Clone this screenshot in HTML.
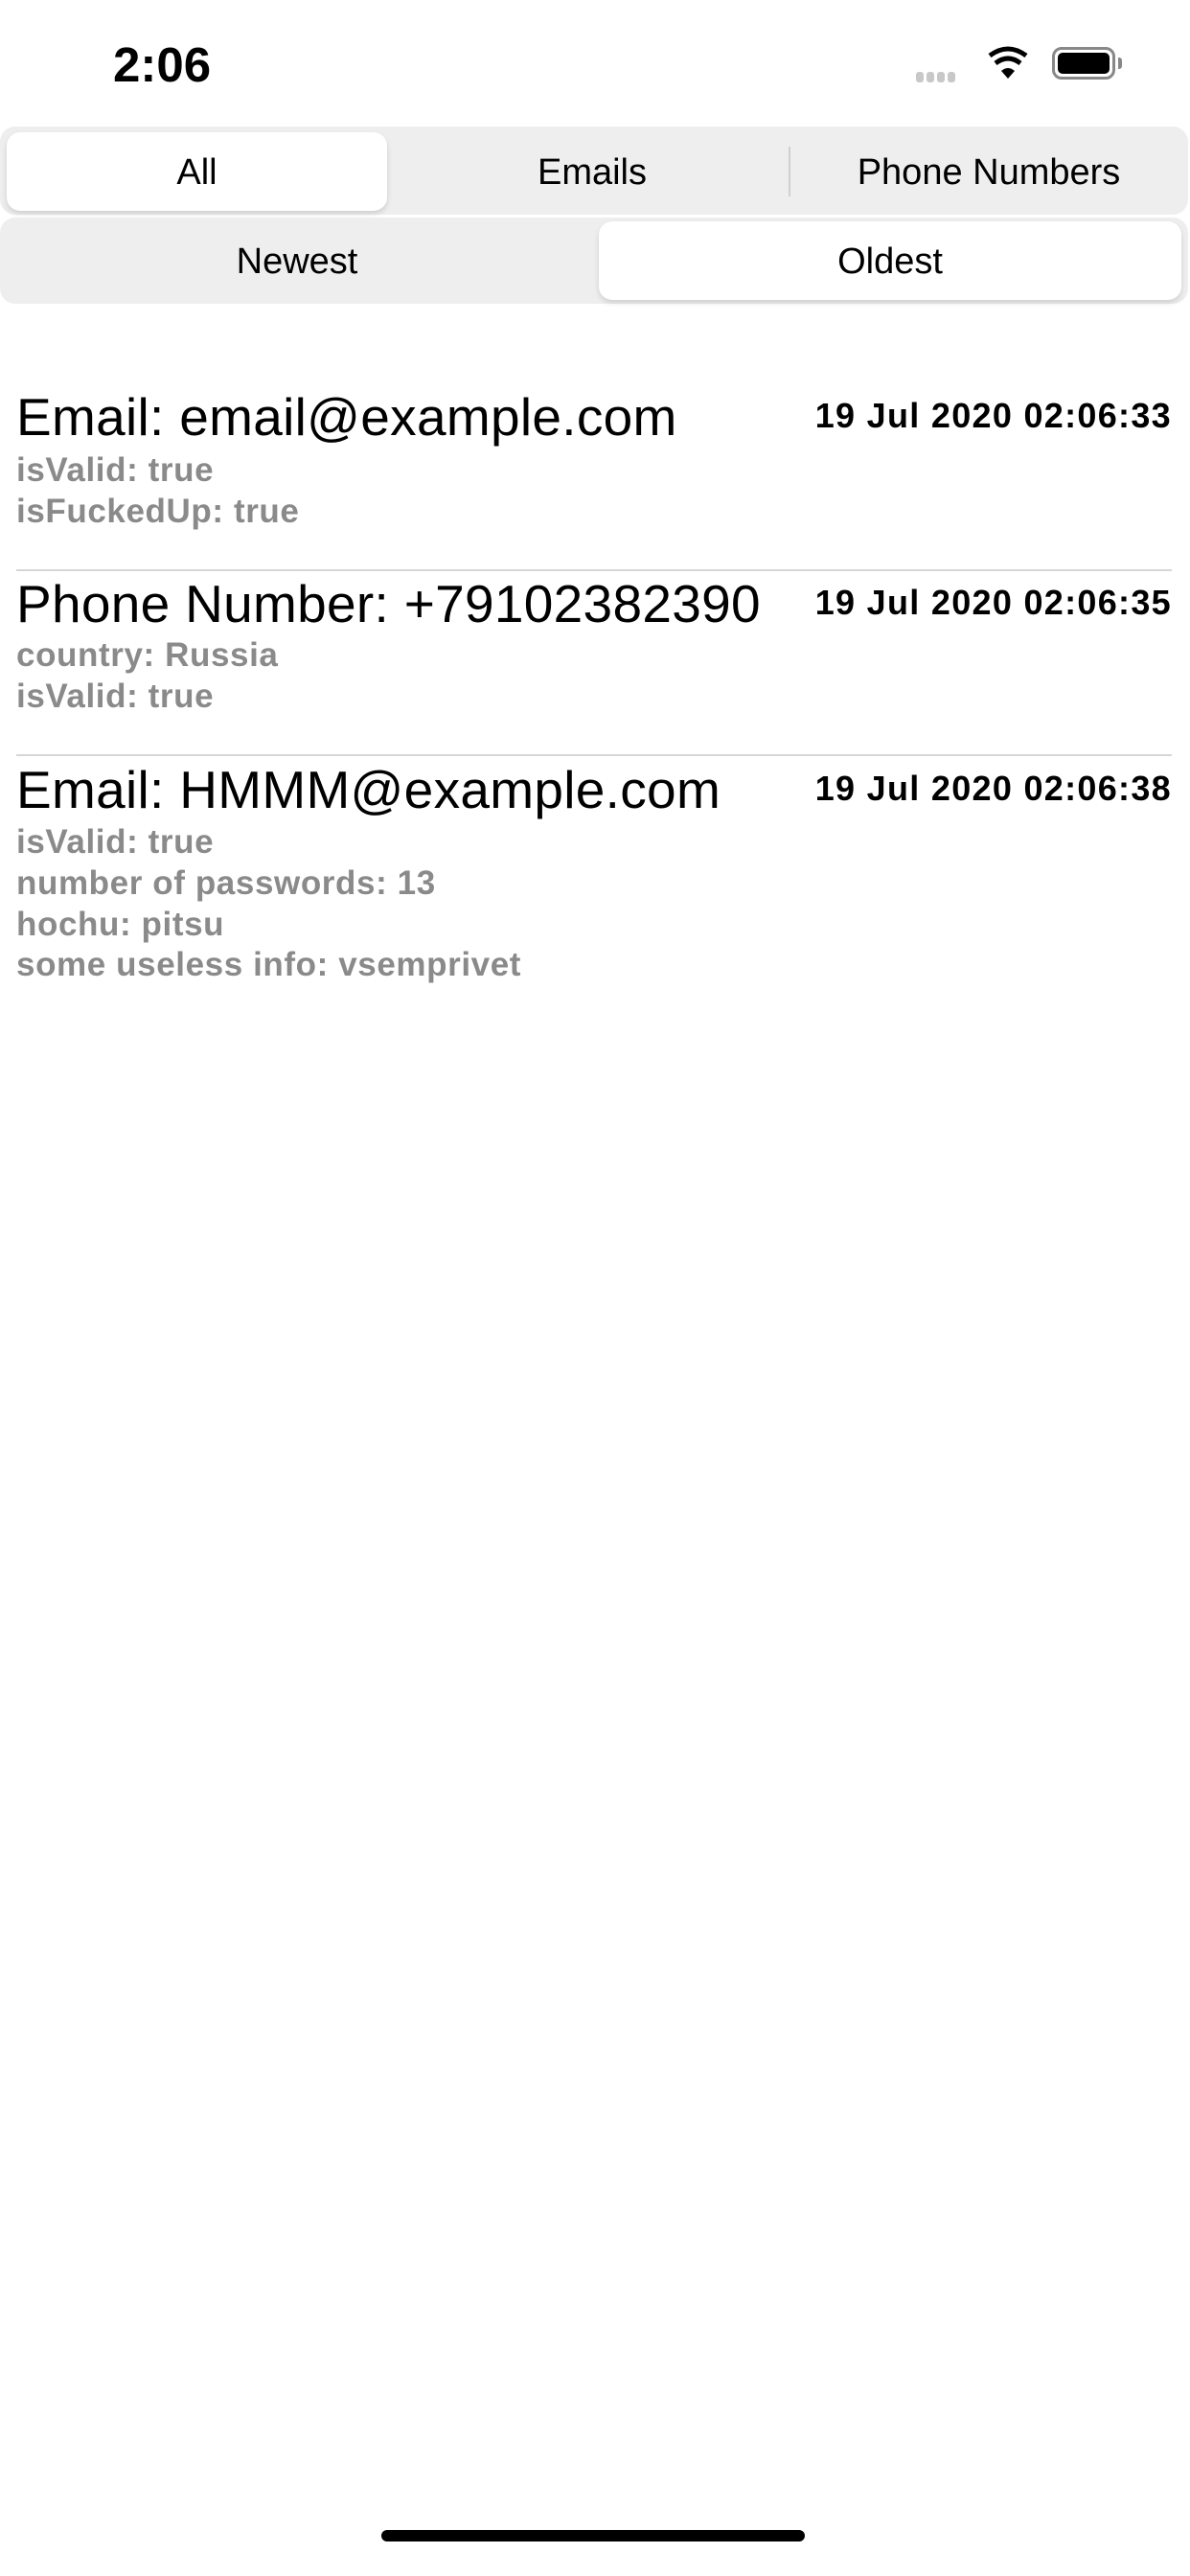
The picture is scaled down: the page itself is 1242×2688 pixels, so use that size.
<!DOCTYPE html>
<html><head><meta charset="utf-8"><style>
*{margin:0;padding:0;box-sizing:border-box}
html,body{width:1242px;height:2688px;background:#fff;overflow:hidden;font-family:"Liberation Sans",sans-serif;position:relative}
.a{position:absolute;white-space:nowrap}
.t{left:17px;font-size:55px;color:#000;height:60px;line-height:60px;letter-spacing:0.3px}
.d{right:19px;font-size:36px;font-weight:bold;color:#000;height:40px;line-height:40px;letter-spacing:1.3px}
.s{left:17px;font-size:35px;font-weight:bold;color:#8a8a8a;height:40px;line-height:40px;letter-spacing:0.6px}
.sep{position:absolute;left:17px;width:1206px;height:2px;background:#d6d6d6}
.seg{position:absolute;background:#eeeeef;border-radius:16px}
.sel{position:absolute;background:#fff;border-radius:14px;box-shadow:0 3px 6px rgba(0,0,0,0.13)}
.lab{position:absolute;font-size:38px;color:#000;height:44px;line-height:44px;text-align:center}
</style></head><body>
<div class="a" style="left:118px;top:40px;font-size:51px;font-weight:bold;line-height:56px">2:06</div>
<div class="a" style="left:956px;top:73px">
<span style="display:inline-block;width:8px;height:11px;background:#c8c8c8;border-radius:3px;margin-right:3px"></span><span style="display:inline-block;width:8px;height:11px;background:#c8c8c8;border-radius:3px;margin-right:3px"></span><span style="display:inline-block;width:8px;height:11px;background:#c8c8c8;border-radius:3px;margin-right:3px"></span><span style="display:inline-block;width:8px;height:11px;background:#c8c8c8;border-radius:3px"></span></div>
<svg class="a" style="left:1030px;top:48px" width="44" height="36" viewBox="0 0 44 36"><path d="M22 34 L15 26 Q22 20 29 26 Z" fill="#000"/><path d="M9 18 Q22 8 35 18" stroke="#000" stroke-width="5" fill="none"/><path d="M3 10 Q22 -4 41 10" stroke="#000" stroke-width="5" fill="none"/></svg>
<div class="a" style="left:1098px;top:49px;width:66px;height:34px;border:3px solid #888;border-radius:10px;padding:3px"><div style="width:100%;height:100%;background:#000;border-radius:5px"></div></div>
<div class="a" style="left:1167px;top:60px;width:4px;height:12px;background:#888;border-radius:0 3px 3px 0"></div>

<div class="seg" style="left:0;top:132px;width:1240px;height:92px"></div>
<div class="sel" style="left:7px;top:138px;width:397px;height:82px"></div>
<div class="a" style="left:823px;top:153px;width:2px;height:52px;background:#d0d0d0"></div>
<div class="lab" style="left:7px;top:158px;width:397px">All</div>
<div class="lab" style="left:415px;top:158px;width:406px">Emails</div>
<div class="lab" style="left:826px;top:158px;width:412px">Phone Numbers</div>

<div class="seg" style="left:0;top:227px;width:1240px;height:90px"></div>
<div class="sel" style="left:625px;top:231px;width:608px;height:82px"></div>
<div class="lab" style="left:0;top:251px;width:620px">Newest</div>
<div class="lab" style="left:625px;top:251px;width:608px">Oldest</div>

<div class="a t" style="top:405px">Email: email@example.com</div>
<div class="a d" style="top:414px">19 Jul 2020 02:06:33</div>
<div class="a s" style="top:471px">isValid: true</div>
<div class="a s" style="top:514px">isFuckedUp: true</div>
<div class="sep" style="top:594px"></div>

<div class="a t" style="top:600px">Phone Number: +79102382390</div>
<div class="a d" style="top:609px">19 Jul 2020 02:06:35</div>
<div class="a s" style="top:664px">country: Russia</div>
<div class="a s" style="top:707px">isValid: true</div>
<div class="sep" style="top:787px"></div>

<div class="a t" style="top:794px">Email: HMMM@example.com</div>
<div class="a d" style="top:803px">19 Jul 2020 02:06:38</div>
<div class="a s" style="top:859px">isValid: true</div>
<div class="a s" style="top:902px">number of passwords: 13</div>
<div class="a s" style="top:945px">hochu: pitsu</div>
<div class="a s" style="top:987px">some useless info: vsemprivet</div>

<div class="a" style="left:398px;top:2640px;width:442px;height:12px;background:#000;border-radius:6px"></div>
</body></html>
